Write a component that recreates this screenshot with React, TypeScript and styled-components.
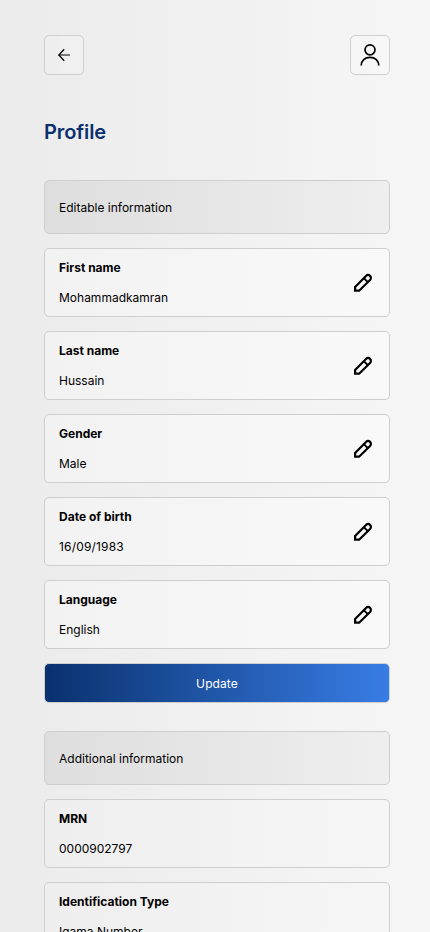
import React from "react";
import styled, { createGlobalStyle } from "styled-components";

const GlobalStyle = createGlobalStyle`
  * { box-sizing: border-box; }
  html, body { margin: 0; height: 100%; overflow: hidden; }
  body { font-family: Inter, "Liberation Sans", sans-serif; color: #000; }
`;

const Page = styled.main`
  height: 932px;
  overflow: hidden;
  padding: 35px 40px 0 44px;
  background: linear-gradient(90deg, #ebebeb, #f6f6f6);
`;

const TopBar = styled.header`
  display: flex;
  justify-content: space-between;
`;

const IconButton = styled.button`
  display: flex;
  align-items: center;
  justify-content: center;
  width: 40px;
  height: 40px;
  padding: 0;
  border: 1px solid #cecece;
  border-radius: 5px;
  background: linear-gradient(90deg, rgba(255, 255, 255, 0.1), rgba(255, 255, 255, 0.2));
`;

const Title = styled.h1`
  margin: 45px 0 35px;
  font-size: 20px;
  line-height: 25px;
  font-weight: 600;
  letter-spacing: -0.1px;
  color: #0a316e;
`;

const Section = styled.section`
  display: flex;
  flex-direction: column;
  gap: 14px;
  margin-bottom: 28px;
`;

const SectionHeader = styled.h2`
  display: flex;
  align-items: center;
  height: 54px;
  margin: 0;
  padding: 0 14px;
  border: 1px solid #cecece;
  border-radius: 5px;
  background: linear-gradient(90deg, #dedede, #eeeeee);
  font-size: 12px;
  line-height: 15px;
  font-weight: 400;
`;

const Card = styled.div<{ $editable: boolean }>`
  display: flex;
  align-items: center;
  justify-content: space-between;
  height: 69px;
  padding: 0 17px 0 14px;
  border: 1px solid #cecece;
  border-radius: 5px;
  background: ${(p) =>
    p.$editable ? "linear-gradient(90deg, #f2f2f2, #f9f9f9)" : "linear-gradient(90deg, #eeeeee, #f6f6f6)"};
`;

const FieldText = styled.div`
  display: flex;
  flex-direction: column;
  gap: 15px;
  font-size: 12px;
  line-height: 15px;
`;

const Label = styled.span`
  font-weight: 700;
`;

const Value = styled.span<{ $spacing: number }>`
  font-weight: 400;
  letter-spacing: ${(p) => p.$spacing}px;
`;

const EditButton = styled.button`
  display: flex;
  padding: 0;
  border: 0;
  background: none;
  color: #000;
`;

const UpdateButton = styled.button`
  height: 40px;
  padding: 0;
  border: 1px solid #cecece;
  border-radius: 5px;
  background: linear-gradient(90deg, #0a316e, #387de5);
  color: #fff;
  font: 400 12px/15px Inter, "Liberation Sans", sans-serif;
  letter-spacing: 0.1px;
`;

const BackIcon = () => (
  <svg width="24" height="24" viewBox="0 0 24 24" fill="none" stroke="#000">
    <path d="M6.8 12H18" strokeWidth="1" />
    <path d="M12.2 6.3 6.8 12l5.4 5.7" strokeWidth="1.25" />
  </svg>
);

const PersonIcon = () => (
  <svg width="24" height="24" viewBox="0 0 24 24" fill="none" stroke="#000" strokeWidth="1.7">
    <circle cx="12" cy="6.8" r="5" />
    <path d="M3.2 22.6c0-5.1 3.7-8.3 8.8-8.3s8.8 3.2 8.8 8.3" />
  </svg>
);

const PencilIcon = () => (
  <svg width="18" height="18" viewBox="0 0 18 18" fill="none" stroke="currentColor" strokeWidth="2.2" overflow="visible">
    <path d="M1.1 12.9 12 1.9a2.85 2.85 0 0 1 4.05 4.05L5.1 16.7h-4z" />
    <path d="m9.8 4.1 4.05 4.05" strokeWidth="2" />
  </svg>
);

interface FieldProps {
  label: string;
  value: string;
  editable?: boolean;
  spacing?: number;
}

const Field = ({ label, value, editable = false, spacing = 0 }: FieldProps) => (
  <Card $editable={editable}>
    <FieldText>
      <Label>{label}</Label>
      <Value $spacing={spacing}>{value}</Value>
    </FieldText>
    {editable && (
      <EditButton aria-label={`Edit ${label}`}>
        <PencilIcon />
      </EditButton>
    )}
  </Card>
);

const editableFields = [
  { label: "First name", value: "Mohammadkamran" },
  { label: "Last name", value: "Hussain" },
  { label: "Gender", value: "Male" },
  { label: "Date of birth", value: "16/09/1983", spacing: 0.18 },
  { label: "Language", value: "English" },
];

const additionalFields = [
  { label: "MRN", value: "0000902797" },
  { label: "Identification Type", value: "Iqama Number" },
];

export default function App() {
  return (
    <>
      <GlobalStyle />
      <Page>
        <TopBar>
          <IconButton aria-label="Back">
            <BackIcon />
          </IconButton>
          <IconButton aria-label="Account">
            <PersonIcon />
          </IconButton>
        </TopBar>
        <Title>Profile</Title>
        <Section>
          <SectionHeader>Editable information</SectionHeader>
          {editableFields.map((f) => (
            <Field key={f.label} {...f} editable />
          ))}
          <UpdateButton>Update</UpdateButton>
        </Section>
        <Section>
          <SectionHeader>Additional information</SectionHeader>
          {additionalFields.map((f) => (
            <Field key={f.label} {...f} />
          ))}
        </Section>
      </Page>
    </>
  );
}
